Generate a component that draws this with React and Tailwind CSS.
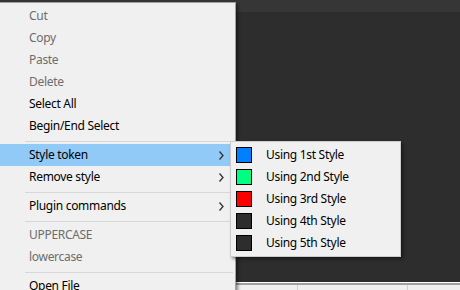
const mainItems = [
    { label: "Cut", disabled: true },
    { label: "Copy", disabled: true },
    { label: "Paste", disabled: true },
    { label: "Delete", disabled: true },
    { label: "Select All" },
    { label: "Begin/End Select" },
    { sep: true },
    { label: "Style token", sub: true, active: true },
    { label: "Remove style", sub: true },
    { sep: true },
    { label: "Plugin commands", sub: true },
    { sep: true },
    { label: "UPPERCASE", disabled: true },
    { label: "lowercase", disabled: true },
    { sep: true },
    { label: "Open File" },
];

const styles = [
    { label: "Using 1st Style", color: "bg-[#0080ff]" },
    { label: "Using 2nd Style", color: "bg-[#00ff80]" },
    { label: "Using 3rd Style", color: "bg-[#ff0000]" },
    { label: "Using 4th Style", color: "bg-[#2d2d2d]" },
    { label: "Using 5th Style", color: "bg-[#2d2d2d]" },
];

function Chevron() {
    return (
        <svg width="5" height="9" viewBox="0 0 5 9" className="absolute right-[7px] top-[7px]">
            <polyline points="0.5,0.5 4,4.5 0.5,8.5" fill="none" stroke="#333" strokeWidth="1.3" />
        </svg>
    );
}

export default function App() {
    return (
        <div className="relative w-[460px] h-[290px] overflow-hidden bg-[#2d2d2d] flex flex-col font-['Noto_Sans',sans-serif] text-[12px] tracking-[-0.3px] leading-none">
            {/* editor chrome */}
            <div className="h-[12px] bg-[#363636]" />
            <div className="flex-1" />
            <div className="h-[8px] flex flex-col">
                <div className="h-px bg-white" />
                <div className="h-[2px] bg-[#a0a0a0]" />
                <div className="flex-1 flex bg-[#f0f0f0]">
                    <div className="w-[298px] border-r border-[#d0d0d0]" />
                    <div className="w-[110px] border-r border-[#d0d0d0]" />
                    <div className="flex-1" />
                </div>
            </div>

            {/* Context menu */}
            <div className="absolute left-[-3px] top-[2px] w-[239px] h-[300px] bg-[#f0f0f0] border border-[#a0a0a0] shadow-[2px_2px_3px_rgba(0,0,0,0.45)] pt-[2px]">
                {mainItems.map((item, i) =>
                    item.sep ? (
                        <div key={i} className="pt-[4px] pb-[2px] ml-[27px] mr-[2px]">
                            <div className="h-px bg-[#d7d7d7]" />
                        </div>
                    ) : (
                        <div
                            key={i}
                            className={`relative h-[22px] ml-[2px] mr-[4px] pl-[29px] flex items-center ${item.active ? "bg-[#91c9f7]" : ""} ${item.disabled ? "text-[#6d6d6d]" : "text-black"}`}
                        >
                            {item.label}
                            {item.sub && <Chevron />}
                        </div>
                    )
                )}
            </div>

            {/* Style token submenu */}
            <div className="absolute left-[230px] top-[141px] w-[171px] h-[116px] bg-[#f0f0f0] border border-[#cccccc] shadow-[2px_2px_3px_rgba(0,0,0,0.45)] py-[2px]">
                {styles.map((s) => (
                    <div key={s.label} className="h-[22px] flex items-center pl-[5px] text-black">
                        <div className={`w-[16px] h-[16px] border border-black ${s.color}`} />
                        <span className="ml-[14px]">{s.label}</span>
                    </div>
                ))}
            </div>
        </div>
    );
}
